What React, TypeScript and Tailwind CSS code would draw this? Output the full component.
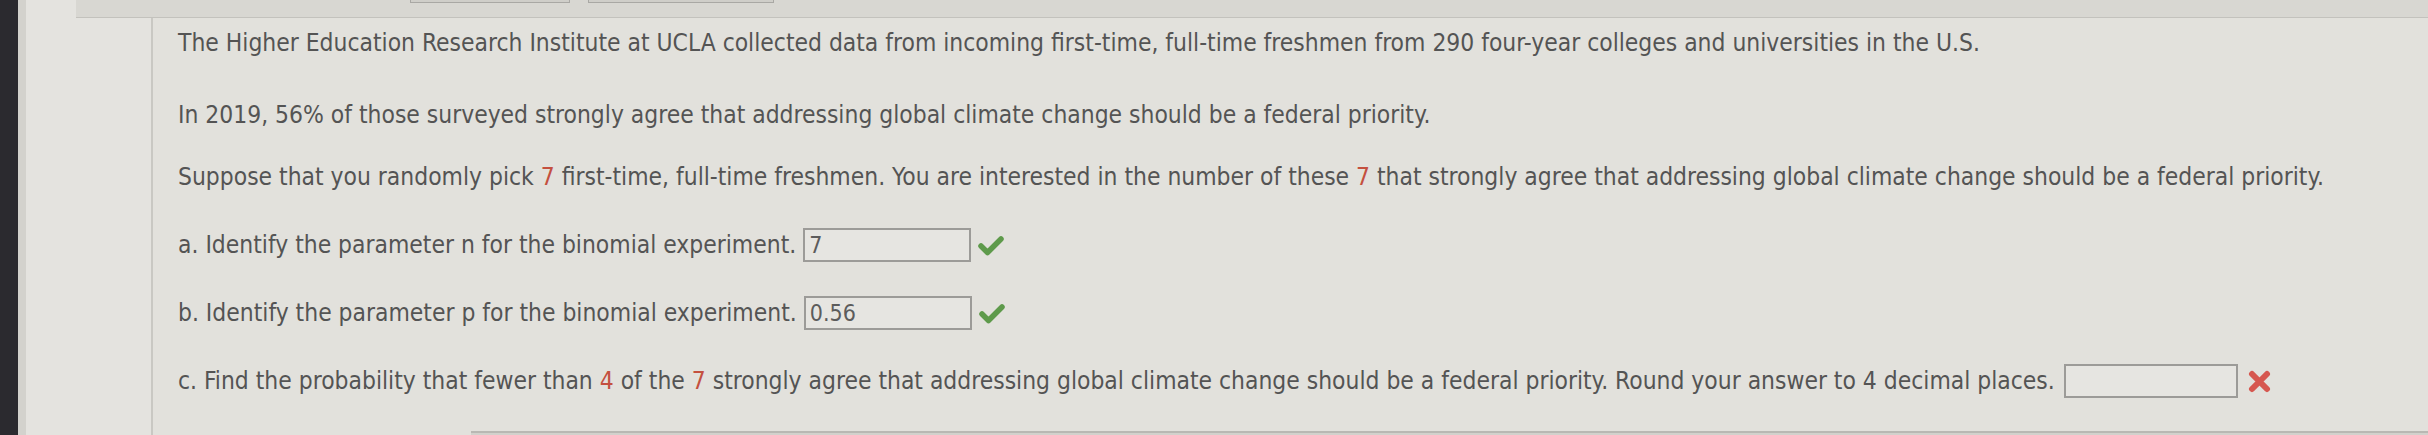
import React from 'react';

const font = { fontFamily: '"DejaVu Sans Condensed", "DejaVu Sans", Verdana, sans-serif', fontStretch: 'condensed' as const };

function Check() {
    return (
        <svg width="26" height="21" viewBox="0 0 26 21" className="shrink-0">
            <path d="M3 11 L9.5 17.5 L23 4" fill="none" stroke="#5e9a4b" strokeWidth="5.5" strokeLinecap="round" strokeLinejoin="round" />
        </svg>
    );
}

function Cross() {
    return (
        <svg width="25" height="23" viewBox="0 0 25 23" className="shrink-0">
            <path d="M5 4 L20 19 M20 4 L5 19" fill="none" stroke="#d6574f" strokeWidth="6" strokeLinecap="round" />
        </svg>
    );
}

function Answer({ value, w = 'w-[168px]' }: { value?: string; w?: string }) {
    return (
        <div className={`${w} h-[34px] border-2 border-[#9c9b98] bg-[#e6e5e1] px-[4px] flex items-center text-[23px] text-[#5c5c5c]`}>
            {value}
        </div>
    );
}

const Red = ({ children }: { children: React.ReactNode }) => <span className="text-[#c4503f]">{children}</span>;

export default function App() {
    return (
        <div className="w-[2428px] h-[435px] flex bg-[#e2e1dc] overflow-hidden" style={font}>
            {/* dark monitor bezel */}
            <div className="w-[18px] bg-[#2b2a2f]" />
            <div className="w-[8px] bg-[#d3d2cd]" />

            <div className="flex-1 flex flex-col">
                {/* top toolbar */}
                <div className="h-[18px] flex">
                    <div className="w-[50px] bg-[#e4e3df]" />
                    <div className="flex-1 bg-[#d8d7d2] border-b border-[#c3c2bd] flex items-start">
                        <div className="ml-[334px] w-[160px] h-[3px] border-b border-x border-[#a9a8a4] bg-[#cfcec9]" />
                        <div className="ml-[18px] w-[186px] h-[3px] border-b border-x border-[#a9a8a4] bg-[#cfcec9]" />
                    </div>
                </div>

                <div className="flex-1 flex">
                    {/* left rail */}
                    <div className="w-[127px] bg-[#e4e3df] border-r-2 border-[#c9c8c3]" />

                    {/* question */}
                    <div className="flex-1 flex flex-col">
                        <div className="flex-1 pl-[25px] pt-[11px] text-[24.4px] leading-[28px] text-[#545454] whitespace-nowrap">
                            <p>The Higher Education Research Institute at UCLA collected data from incoming first-time, full-time freshmen from 290 four-year colleges and universities in the U.S.</p>
                            <p className="mt-[44px]">In 2019, 56% of those surveyed strongly agree that addressing global climate change should be a federal priority.</p>
                            <p className="mt-[34px]">
                                Suppose that you randomly pick <Red>7</Red> first-time, full-time freshmen. You are interested in the number of these <Red>7</Red> that strongly agree that addressing global climate change should be a federal priority.
                            </p>

                            <div className="mt-[37px] flex items-center gap-[7px]">
                                <span>a. Identify the parameter n for the binomial experiment.</span>
                                <Answer value="7" />
                                <Check />
                            </div>
                            <div className="mt-[34px] flex items-center gap-[7px]">
                                <span>b. Identify the parameter p for the binomial experiment.</span>
                                <Answer value="0.56" />
                                <Check />
                            </div>
                            <div className="mt-[34px] flex items-center gap-[9px]">
                                <span>
                                    c. Find the probability that fewer than <Red>4</Red> of the <Red>7</Red> strongly agree that addressing global climate change should be a federal priority. Round your answer to 4 decimal places.
                                </span>
                                <Answer w="w-[174px]" />
                                <Cross />
                            </div>
                        </div>
                        {/* bottom bar edge */}
                        <div className="h-[4px] flex">
                            <div className="w-[318px]" />
                            <div className="flex-1 border-t-2 border-[#b9b8b3] bg-[#d2d1cc]" />
                        </div>
                    </div>
                </div>
            </div>
        </div>
    );
}
